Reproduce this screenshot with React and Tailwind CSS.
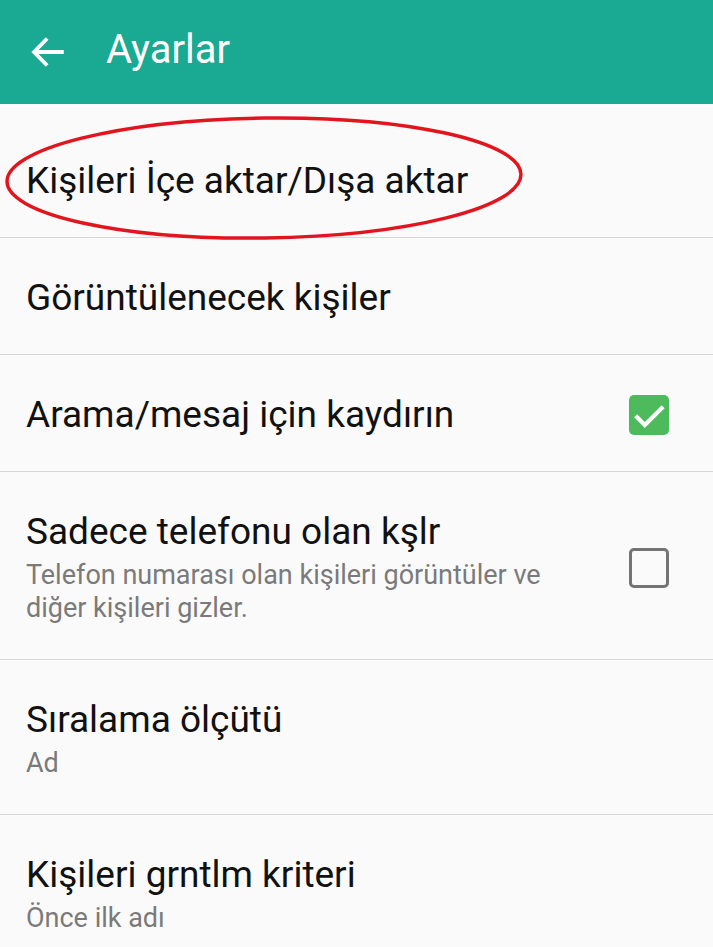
import React from 'react';

function Checkbox({ checked }) {
  if (checked) {
    return (
      <div className="w-[40px] h-[40px] rounded-[5px] bg-[#4dbb5b] flex items-center justify-center flex-shrink-0">
        <svg width="40" height="40" viewBox="0 0 24 24" fill="none">
          <path d="M4 12.5l5.5 5.5L20.5 7" stroke="#fff" strokeWidth="2.5" />
        </svg>
      </div>
    );
  }
  return (
    <div className="w-[40px] h-[40px] rounded-[5px] border-[3px] border-[#747474] flex-shrink-0" />
  );
}

function SettingRow({ title, subtitle, check }) {
  return (
    <div className="flex items-center pl-[26px] pr-[44px] pt-[38px] pb-[34px] border-b border-[#d7d7d7]">
      <div className="flex-1">
        <div className="text-[37px] leading-[44px] text-[#111]">{title}</div>
        {subtitle && (
          <div className="mt-[5px] pr-[40px] text-[27px] leading-[33px] text-[#7a7a7a]">{subtitle}</div>
        )}
      </div>
      {check !== undefined && <Checkbox checked={check} />}
    </div>
  );
}

export default function App() {
  return (
    <div className="w-[713px] h-[947px] overflow-hidden bg-[#fafafa]" style={{ fontFamily: 'Roboto, "Noto Sans", sans-serif' }}>
      {/* Toolbar */}
      <div className="h-[104px] bg-[#1aa993] flex items-center">
        <div className="w-[106px] flex items-center pl-[27px]">
          <svg width="42" height="42" viewBox="0 0 24 24" fill="none">
            <path d="M21 12H4M11.5 4.3L4 12l7.5 7.7" stroke="#fff" strokeWidth="2.2" />
          </svg>
        </div>
        <span className="text-[40px] text-white leading-none -mt-[4px]">Ayarlar</span>
      </div>

      {/* List */}
      <div className="relative pt-[17px]">
        <SettingRow title="Kişileri İçe aktar/Dışa aktar" />
        <SettingRow title="Görüntülenecek kişiler" />
        <SettingRow title="Arama/mesaj için kaydırın" check={true} />
        <SettingRow
          title="Sadece telefonu olan kşlr"
          subtitle="Telefon numarası olan kişileri görüntüler ve diğer kişileri gizler."
          check={false}
        />
        <SettingRow title="Sıralama ölçütü" subtitle="Ad" />
        <SettingRow title="Kişileri grntlm kriteri" subtitle="Önce ilk adı" />

        {/* red annotation around first item */}
        <svg className="absolute left-0 top-0 pointer-events-none" width="713" height="150" viewBox="0 0 713 150">
          <ellipse cx="264" cy="74" rx="257" ry="60" fill="none" stroke="#e2151f" strokeWidth="3.5" transform="rotate(-0.8 264 74)" />
        </svg>
      </div>
    </div>
  );
}
